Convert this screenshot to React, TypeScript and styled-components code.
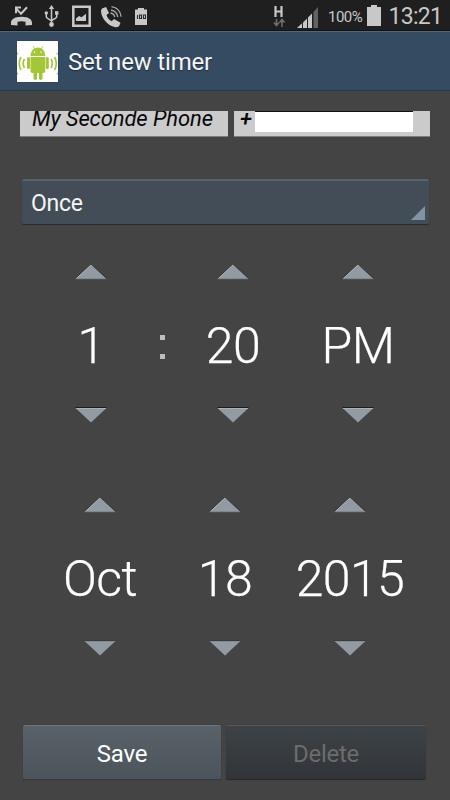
import React from "react";
import styled, { createGlobalStyle } from "styled-components";

const GlobalStyle = createGlobalStyle`
  body { margin: 0; background: #444; }
  * { box-sizing: border-box; }
`;

const Screen = styled.div`
  width: 450px;
  height: 800px;
  display: flex;
  flex-direction: column;
  overflow: hidden;
  background: #444;
  color: #fff;
  font-family: Roboto, sans-serif;
`;

const StatusBar = styled.header`
  height: 31px;
  flex: none;
  display: flex;
  align-items: flex-start;
  background: #1f1f1f;
  border-bottom: 1px solid #14110c;
  color: #c8c8c8;
  svg { flex: none; display: block; }
`;

const NoticeIcons = styled.div`
  display: flex;
  flex: none;
  width: 272px;
`;

const StatusText = styled.span<{ $size: number; $width: number; $top: number; $left: number; $spacing?: number }>`
  flex: none;
  width: ${(p) => p.$width}px;
  margin-left: ${(p) => p.$left}px;
  padding-top: ${(p) => p.$top}px;
  font-size: ${(p) => p.$size}px;
  line-height: 24px;
  letter-spacing: ${(p) => p.$spacing ?? 0}px;
  white-space: nowrap;
`;

const TitleBar = styled.div`
  height: 60px;
  flex: none;
  display: flex;
  align-items: center;
  padding-left: 17px;
  padding-bottom: 1px;
  background: #344b61;
  border-top: 1px solid #52677d;
  border-bottom: 1px solid #223c4b;
`;

const AppIcon = styled.svg`
  width: 41px;
  height: 41px;
  flex: none;
  margin-top: 1px;
  box-shadow: 0 0 1px #193048;
`;

const Title = styled.h1`
  margin: 2px 0 0 10px;
  font-size: 24px;
  font-weight: 400;
  line-height: 30px;
  letter-spacing: -0.18px;
  color: #f5f5f5;
  text-shadow: 0 1px 1px #1c2c3c;
`;

const ContactRow = styled.div`
  display: flex;
  gap: 6px;
  flex: none;
  height: 26px;
  margin: 20px 20px 0;
  overflow: hidden;
  color: #080808;
`;

const ContactCell = styled.div<{ $width: number; $left: number }>`
  width: ${(p) => p.$width}px;
  padding-left: ${(p) => p.$left}px;
  display: flex;
  align-items: flex-start;
  background: #cbcbcb;
  border: solid #7d7d7d;
  border-width: 0 0 1px;
`;

const ContactText = styled.span<{ $top: number; $bold?: boolean }>`
  margin-top: ${(p) => p.$top}px;
  font-size: 22px;
  font-style: italic;
  font-weight: ${(p) => (p.$bold ? 500 : 400)};
  letter-spacing: -0.1px;
  line-height: 26px;
  white-space: nowrap;
`;

const NumberMask = styled.div`
  width: 158px;
  height: 21px;
  margin-left: auto;
  margin-right: 17px;
  background: #fff;
  border-top: 1px solid #111;
`;

const Select = styled.div`
  flex: none;
  display: flex;
  align-items: center;
  justify-content: space-between;
  width: 407px;
  height: 46px;
  margin: 42px 0 0 21.5px;
  padding: 0 4px 0 9.5px;
  border-radius: 2px;
  background: #434d57;
  border-top: 2px solid #5a636c;
  border-bottom: 1px solid #252c35;
  box-shadow: 0 0 1px #2c3239;
  font-size: 23px;
  letter-spacing: -0.3px;
  color: #f5f5f5;
`;

const SelectLabel = styled.span`
  padding-top: 2px;
`;

const SelectCorner = styled.svg`
  width: 14px;
  height: 14px;
  align-self: flex-end;
  margin-bottom: 4px;
`;

const PickerRow = styled.div<{ $columns: string; $top: number; $left: number }>`
  flex: none;
  display: grid;
  grid-template-columns: ${(p) => p.$columns};
  height: 159px;
  margin: ${(p) => p.$top}px 0 0 ${(p) => p.$left}px;
`;

const Picker = styled.div`
  display: flex;
  flex-direction: column;
  align-items: center;
  justify-content: space-between;
`;

const PickerValue = styled.div`
  padding-top: 4px;
  font-size: 50px;
  font-weight: 300;
  line-height: 60px;
  letter-spacing: -0.6px;
  -webkit-text-stroke: 0.25px #fff;
  white-space: nowrap;
`;

const Colon = styled.div`
  display: flex;
  flex-direction: column;
  align-items: center;
  padding-top: 71px;
  gap: 14px;
`;

const ColonDot = styled.span`
  width: 5px;
  height: 5px;
  background: #bdbdbd;
`;

const Actions = styled.footer`
  display: flex;
  gap: 5px;
  flex: none;
  margin: 69px 0 0 23px;
`;

const Action = styled.button<{ $width: number }>`
  width: ${(p) => p.$width}px;
  height: 55px;
  padding: 3px 0 0;
  border: 0;
  border-top: 1px solid #6d757d;
  border-bottom: 1px solid #343a40;
  border-radius: 2px;
  background: linear-gradient(#596169, #4b535b);
  box-shadow: 0 0 1px #292d31;
  font: 400 24px/30px Roboto, sans-serif;
  letter-spacing: -0.25px;
  color: #fff;
  &:disabled {
    background: linear-gradient(#3d4246, #313539);
    border-top-color: #56595c;
    border-bottom-color: #282b2e;
    color: #6c6c6c;
  }
`;

function Arrow({ down, edged }: { down?: boolean; edged?: boolean }) {
  return (
    <svg width="33" height="16" viewBox="0.5 0 33 16">
      {down ? (
        <>
          <path d="M1 .5h31" stroke={edged ? "#1c1c1c" : "#3a3a3a"} />
          <path d="M1 1h31L16.5 15.500z" fill="#929ba3" />
          <path d="M1.5 1.5h30" stroke={edged ? "#abb1b5" : "#858c91"} />
        </>
      ) : (
        <>
          <path d="M.5 14.5 16.5 .2l16 14.3" fill="none" stroke="#303030" strokeWidth=".8" />
          <path d="M1 15 16.5 .5 32 15z" fill="#929ba3" />
          <path d="M1.8 14.5 16.5 1" fill="none" stroke="#b5bbc0" strokeWidth=".8" />
          <path d="M1 15h31" stroke="#5f666c" strokeWidth=".7" />
        </>
      )}
    </svg>
  );
}

function Spinner({ value, edged }: { value: string; edged?: boolean }) {
  return (
    <Picker>
      <Arrow />
      <PickerValue>{value}</PickerValue>
      <Arrow down edged={edged} />
    </Picker>
  );
}

function Notices() {
  return (
    <NoticeIcons>
      <svg width="40" height="30" viewBox="0 -.8 40 30" fill="#c8c8c8">
        <path d="M11 22c0-3 3-6 10.500-6S32 19 32 22v2.300l-6.500.3v-3.600c-2.500-.8-5.500-.8-8 0v3.600L11 24.300z" />
        <path d="M16 6.500v6M15 6.700h6M16 7.500l5 5.500 6-6.500" fill="none" stroke="#c8c8c8" strokeWidth="2" />
      </svg>
      <svg width="26" height="30" viewBox="40 -.5 26 30" fill="#c8c8c8">
        <path d="m51.500 4.500 2.700 4h-5.400z" />
        <circle cx="51.500" cy="24" r="2.400" />
        <circle cx="46.300" cy="12.500" r="1.700" />
        <path d="M55 10.700h3.400v3.400H55z" />
        <path d="M51.500 8v15M46.300 13v3q0 1 1 1.600l4.200 2.900M56.700 13v3q0 1-1 1.600l-4.200 2.400" fill="none" stroke="#c8c8c8" strokeWidth="1.500" />
      </svg>
      <svg width="31" height="30" viewBox="66 0 31 30">
        <path d="M73.300 6.700h16.400v19H73.300z" fill="none" stroke="#c8c8c8" strokeWidth="2.500" />
        <path d="M76 21v-2.500l3-2.500 2.500 1.200 4.500-3.500v7.300z" fill="#c8c8c8" />
      </svg>
      <svg width="33" height="30" viewBox="97 0 33 30" fill="#c8c8c8">
        <path d="m102 8.500 4-1.500 3 6-2.500 2c1 3 2.500 4.700 5.200 6.200l2.300-2.200 6.500 3.800-1.500 3.500q-2.500 1.500-6 .3C106 24 101 17 101 10.500z" />
        <path d="M111.500 6.700q8.500 1.300 9.700 10M111 10q5.800 1 6.800 7M110.500 13q3.500.5 4.300 4" fill="none" stroke="#aaa" strokeWidth="1.300" />
      </svg>
      <svg width="24" height="30" viewBox="130 0 24 30">
        <path d="M135 9.500h3V8h6v1.500h3V25h-12z" fill="#c8c8c8" />
        <path d="M137.500 15v4M139.500 15h2v3.500h-2zM143.500 15h2v3.500h-2z" fill="none" stroke="#292929" strokeWidth="1.100" />
      </svg>
    </NoticeIcons>
  );
}

function AndroidIcon() {
  return (
    <AppIcon viewBox="0 0 41 41">
      <path fill="#fff" d="M0 0h41v41H0z" />
      <g fill="#a4c639">
        <path d="M13.500 15c.3-5 3-8.500 7.500-8.500s7 3.500 7.300 8.500z" />
        <path d="M13.500 16h14.800v14q0 2-2 2h-11q-1.800 0-1.800-2z" />
        <rect x="10" y="16" width="3" height="12" rx="1.500" />
        <rect x="28.800" y="16" width="3" height="12" rx="1.500" />
        <rect x="16.500" y="28" width="3.500" height="11" rx="1.700" />
        <rect x="22" y="28" width="3.500" height="11" rx="1.700" />
      </g>
      <path d="m16 5 2 3M26 5l-2 3" stroke="#a4c639" strokeWidth=".8" />
      <path d="M17.500 10.500v1.300M24.200 10.500v1.300" stroke="#fff" strokeWidth="1.300" />
      <path d="M7.500 18q-2.600 4.500 0 9M4 16q-3.500 6.500 0 13M34 18q2.600 4.500 0 9M37.500 16q3.500 6.500 0 13" fill="none" stroke="#a4c639" strokeWidth="1.700" />
      <path d="M0 12.500h1.300M0 32.500h1.300M39.700 12.500H41M39.700 32.500H41" stroke="#a4c639" strokeWidth="1.500" />
    </AppIcon>
  );
}

export default function App() {
  return (
    <>
      <GlobalStyle />
      <Screen>
        <StatusBar>
          <Notices />
          <svg width="50" height="30" viewBox="272 0 50 30">
            <path d="M275.500 6v11M281.500 6v11M275 11.500h7" stroke="#c8c8c8" strokeWidth="2.200" fill="none" />
            <path d="M276.500 19v6m-2.500-2.500 2.500 3 2.500-3M282 27v-7m-2.500 2.500 2.500-3 2.500 3" stroke="#707070" strokeWidth="1.500" fill="none" />
            <path d="m297 28 5-4.700V28zM303 28v-5.500l4-4V28zM308 28V17.500l4-4V28z" fill="#c8c8c8" />
            <path d="M313.500 28V12l4.500-5v21z" fill="#626262" />
          </svg>
          <StatusText $size={15} $width={36} $left={6} $top={5} $spacing={-0.5}>100%</StatusText>
          <svg width="18" height="30" viewBox="364 0 18 30">
            <path d="M367 7h4V5h6v2h4v19h-14z" fill="#c8c8c8" />
          </svg>
          <StatusText $size={23} $width={58} $left={6.5} $top={5} $spacing={-0.7}>13:21</StatusText>
        </StatusBar>
        <TitleBar>
          <AndroidIcon />
          <Title>Set new timer</Title>
        </TitleBar>
        <ContactRow>
          <ContactCell $width={208} $left={12}>
            <ContactText $top={-5.5}>My Seconde Phone</ContactText>
          </ContactCell>
          <ContactCell $width={196} $left={6}>
            <ContactText $top={-5} $bold>+</ContactText>
            <NumberMask />
          </ContactCell>
        </ContactRow>
        <Select>
          <SelectLabel>Once</SelectLabel>
          <SelectCorner viewBox="0 0 14 14"><path d="M0 14 14 0v14z" fill="#8194a6" /></SelectCorner>
        </Select>
        <PickerRow $columns="126px 16px 126px 124px" $top={39} $left={28}>
          <Spinner value="1" edged />
          <Colon><ColonDot /><ColonDot /></Colon>
          <Spinner value="20" edged />
          <Spinner value="PM" edged />
        </PickerRow>
        <PickerRow $columns="repeat(3, 125px)" $top={74} $left={37.5}>
          <Spinner value="Oct" />
          <Spinner value="18" />
          <Spinner value="2015" />
        </PickerRow>
        <Actions>
          <Action $width={198}>Save</Action>
          <Action $width={200} disabled>Delete</Action>
        </Actions>
      </Screen>
    </>
  );
}
